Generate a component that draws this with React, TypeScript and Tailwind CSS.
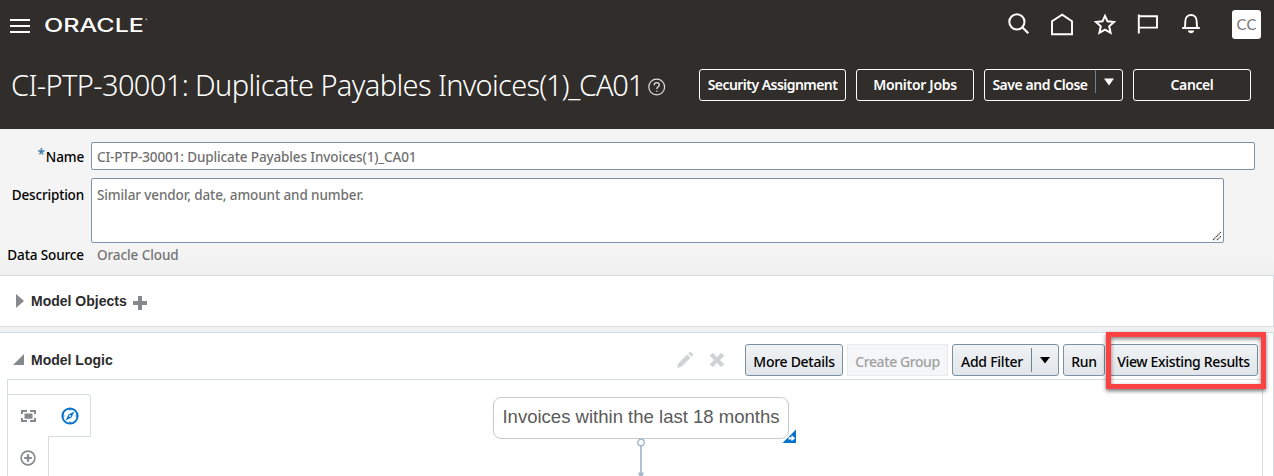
import React from "react";

const icon = { fill: "none", stroke: "#fff", strokeWidth: 2 } as const;

function Logo() {
  return (
    <svg width="108" height="24" viewBox="0 0 108 24" className="ml-[13px] mt-[1px] overflow-visible" aria-label="ORACLE">
      <text x="1" y="18.5" textLength="100" lengthAdjust="spacingAndGlyphs" fill="#fff" className="font-['Inter'] text-[18px] font-medium">
        ORACLE
      </text>
      <circle cx="103.3" cy="6.3" r="0.9" fill="#bbb" />
    </svg>
  );
}

function TopIcons() {
  return (
    <div className="flex items-center">
      <svg width="24" height="24" className="mr-[19px]" {...icon}>
        <circle cx="9.9" cy="9.8" r="7.6" />
        <path d="M15.3 15.3 21.3 21.3" strokeWidth="2.2" />
      </svg>
      <svg width="24" height="24" className="mr-[19px]" {...icon}>
        <path d="M2 22.2V9.3L12.2 2.6 22 9.3V22.2Z" strokeWidth="1.9" />
      </svg>
      <svg width="24" height="24" className="mr-[19px]" {...icon}>
        <path d="M12 3.8 14.5 9.3 21 10 16.2 14.3 17.6 20.8 12 17.6 6.4 20.8 7.8 14.3 3 10 9.5 9.3Z" strokeWidth="2" />
      </svg>
      <svg width="24" height="24" className="mr-[19px]" {...icon}>
        <path d="M2.8 2.5V21.6M2.8 4.3H21V15.6H2.8" strokeWidth="1.9" />
      </svg>
      <svg width="24" height="24" className="mr-[29px]" {...icon}>
        <path d="M3.2 16H20.8M5.6 16C6.4 14 6.2 12 6.3 9.3 6.4 5.5 8.7 3 12 3S17.6 5.5 17.7 9.3C17.8 12 17.6 14 18.4 16" strokeWidth="1.9" />
        <path d="M8.7 18.4H15.3C14.8 20 13.7 21.2 12 21.2S9.2 20 8.7 18.4Z" fill="#fff" stroke="none" />
      </svg>
      <div className="flex h-[29px] w-[29px] items-center justify-center rounded-[3px] bg-white font-['Lato'] text-[15px] text-[#777]">CC</div>
    </div>
  );
}

const darkButton = "flex h-8 items-center justify-center rounded-[3px] border border-white text-sm font-semibold text-white whitespace-nowrap";
const lightButton =
  "flex h-8 items-center justify-center rounded-[3px] border border-[#7a91a3] bg-linear-to-b from-[#f1f3f5] to-[#e1e5e9] pt-[3px] text-sm font-medium text-black whitespace-nowrap";

function Header() {
  return (
    <header className="h-[129px] bg-[#312d2a]">
      <div className="flex h-12 items-center justify-between pr-[13px] pl-[10px]">
        <div className="flex items-center">
          <svg width="20" height="16" className="mt-[4px]">
            <path d="M0 2H20M0 8H20M0 14H20" stroke="#fff" strokeWidth="2" />
          </svg>
          <Logo />
        </div>
        <TopIcons />
      </div>
      <div className="flex h-[74px] items-center justify-between pr-[23px] pl-[11px]">
        <div className="flex items-center">
          <h1 className="w-[637px] text-[29px] leading-10 font-light tracking-[-0.72px] whitespace-nowrap text-white">
            <span className="tracking-[-0.62px]">CI-PTP-30001: Duplicate Payables </span>Invoices<span className="tracking-[-1.25px]">(1)_CA01</span>
          </h1>
          <svg width="18" height="18" className="mt-[3px]">
            <circle cx="8.7" cy="9" r="7.9" fill="none" stroke="#ddd" strokeWidth="1.2" />
            <path d="M6.2 7.2C6.2 5.6 7.2 4.7 8.7 4.7S11.3 5.6 11.3 6.9C11.3 8.7 8.8 8.7 8.8 11M8.8 12.4V13.7" fill="none" stroke="#ddd" strokeWidth="1.3" />
          </svg>
        </div>
        <div className="flex gap-[10px]">
          <button className={`${darkButton} w-[147px] tracking-[-0.54px]`}>Security Assignment</button>
          <button className={`${darkButton} w-[118px] tracking-[-0.3px]`}>Monitor Jobs</button>
          <button className={`${darkButton} w-[139px] tracking-[-0.45px]`}>
            <span className="w-[110px] text-center">Save and Close</span>
            <span className="mb-[7px] flex h-[23px] w-[27px] items-center justify-center border-l border-[#6e8494]">
              <svg width="10" height="8"><path d="M0 0.5H10L5 7.5Z" fill="#fff" /></svg>
            </span>
          </button>
          <button className={`${darkButton} w-[118px] tracking-[-0.4px]`}>Cancel</button>
        </div>
      </div>
    </header>
  );
}

function Form() {
  return (
    <section className="h-[146px] bg-linear-to-b from-[#f4f4f4] from-85% to-[#efefef] pt-[13px] text-[13.5px] font-medium">
      <div className="flex h-7 items-center">
        <label className="w-[91px] pt-[3px] pr-[7px] text-right tracking-[-0.15px] text-black"><span className="relative -top-[3px] mr-[1px] text-[#2d76a8]">*</span>Name</label>
        <div className="flex h-7 w-[1164px] items-center rounded-[2px] border border-[#7d93a5] bg-white pt-[2px] pl-[5px] tracking-[-0.12px] text-[#707070]">CI-PTP-30001: Duplicate Payables Invoices(1)_CA01</div>
      </div>
      <div className="mt-2 flex h-[65px]">
        <label className="w-[91px] pt-[7px] pr-[7px] text-right tracking-[-0.17px] text-black">Description</label>
        <div className="flex w-[1133px] justify-between rounded-[2px] border border-[#7d93a5] bg-white pt-[6px] pl-[5px] text-[#707070]">
          <span className="tracking-[-0.1px]">Similar vendor, date, amount and number.</span>
          <svg width="10" height="10" className="mr-[1px] mb-[1px] self-end">
            <path d="M1 9 9 1M5 9 9 5" stroke="#444" strokeWidth="1.1" strokeDasharray="1.5 0.5" />
          </svg>
        </div>
      </div>
      <div className="flex h-6 items-center">
        <span className="w-[91px] pr-[7px] text-right tracking-[-0.12px] whitespace-nowrap text-black">Data Source</span>
        <span className="pl-[6px] tracking-[-0.08px] text-[#747474]">Oracle Cloud</span>
      </div>
    </section>
  );
}

function LogicToolbar() {
  return (
    <div className="flex h-[46px] items-start justify-between pr-[15px] pl-[13px]">
      <div className="flex items-center pt-[17px]">
        <svg width="12" height="12"><path d="M11 0V11H0Z" fill="#85898c" /></svg>
        <h2 className="ml-[6px] font-['Liberation_Sans'] text-sm leading-5 font-bold text-[#2b2b2b]">Model Logic</h2>
      </div>
      <div className="flex pt-[11px]">
        <svg width="18" height="18" className="mt-[7px] mr-[15px]" fill="#cfd3d4">
          <path d="M1 17 2.4 12.3 11.2 3.5 14.5 6.8 5.7 15.6ZM12.2 2.5 13.5 1.2Q14.2.6 15 1.3L16.7 3Q17.4 3.8 16.8 4.5L15.5 5.8Z" />
        </svg>
        <svg width="16" height="16" className="mt-[8px] mr-[20px]">
          <path d="M2.2 2.2 13.8 13.8M13.8 2.2 2.2 13.8" stroke="#cfd3d4" strokeWidth="4.2" />
        </svg>
        <div className="flex gap-1">
          <button className={`${lightButton} w-[98px] tracking-[-0.28px]`}>More Details</button>
          <button className="flex h-8 w-[101px] items-center justify-center border border-[#e7eaed] bg-[#f5f6f8] pt-[3px] text-sm font-medium tracking-[-0.42px] whitespace-nowrap text-[#a0a0a0]">Create Group</button>
          <button className={`${lightButton} w-[107px] tracking-[-0.25px]`}>
            <span className="w-[78px] text-center">Add Filter</span>
            <span className="-mt-[3px] flex h-6 w-[27px] items-center justify-center border-l border-[#6e8494]">
              <svg width="10" height="8"><path d="M0 1H10L5 7.5Z" fill="#000" /></svg>
            </span>
          </button>
          <button className={`${lightButton} w-[42px] tracking-[-0.3px]`}>Run</button>
          <div className="relative z-10">
            <button className={`${lightButton} w-[149px] tracking-[-0.34px]`}>View Existing Results</button>
            <div className="absolute -top-[12px] -left-[3px] h-[57px] w-[160px] border-[5px] border-[#fb4242] shadow-[0_2px_4px_rgba(0,0,0,0.55),inset_0_2px_4px_rgba(0,0,0,0.5)]" />
          </div>
        </div>
      </div>
    </div>
  );
}

function Canvas() {
  return (
    <div className="relative ml-[7px] h-[97px] w-[1256px] border-x border-t border-[#d5dde3] pt-[14px]">
      <div className="flex h-[43px] w-[83px] items-center rounded-tr-[3px] border-t border-r border-b border-[#d5dde3]">
        <svg width="16" height="14" className="ml-[13px]" fill="#85898c">
          <path d="M0 1H6V3H2V5H0ZM9 1H15V5H13V3H9ZM0 9H2V11H6V13H0ZM13 9H15V13H9V11H13ZM3.5 4.5H11.5V9.8H3.5Z" />
        </svg>
        <svg width="18" height="18" viewBox="0 0 18 18" className="ml-[24px]">
          <circle cx="9" cy="9" r="7.6" fill="none" stroke="#0572ce" strokeWidth="2" />
          <path d="M9 1V3.5M9 14.5V17M1 9H3.5M14.5 9H17" stroke="#0572ce" strokeWidth="1.2" />
          <path d="M13.4 4.4 10.5 10.5 4.6 13.6 7.5 7.5Z" fill="#0572ce" />
          <circle cx="9" cy="9" r="1" fill="#fff" />
        </svg>
      </div>
      <div className="-mt-px flex h-[42px] w-[41px] items-start border-r border-[#d5dde3] bg-white pt-[14px] pl-[12px]">
        <svg width="17" height="17">
          <circle cx="8" cy="8" r="6.9" fill="none" stroke="#85898c" strokeWidth="1.6" />
          <path d="M8 4.2V11.8M4.2 8H11.8" stroke="#85898c" strokeWidth="2.2" />
        </svg>
      </div>
      <div className="absolute top-[17px] left-[485px] flex h-[42px] w-[296px] items-center justify-center rounded-[8px] border-[1.5px] border-[#c7c9cb] bg-white pb-[3px] font-['Liberation_Sans'] text-[18.55px] whitespace-nowrap text-[#5a5a5a]">
        Invoices within the last 18 months
      </div>
      <svg width="15" height="15" className="absolute top-[49px] left-[774px]">
        <path d="M14 0.5V14H0.5Z" fill="#0572ce" />
        <path d="M6.5 8.2H9.5V6.3L13.3 9.3 9.5 12.3V10.5H6.5Z" fill="#fff" />
      </svg>
      <svg width="12" height="38" className="absolute top-[58px] left-[627px]" stroke="#a3b8ca">
        <path d="M6 8V38" strokeWidth="1.7" />
        <circle cx="6" cy="4.5" r="3.2" fill="#fff" strokeWidth="1.4" />
        <path d="M3 34.5H9L7.5 38H4.5Z" fill="#a3b8ca" stroke="none" />
      </svg>
    </div>
  );
}

export default function App() {
  return (
    <div className="h-[476px] w-[1274px] overflow-hidden bg-[#eff1f3] font-['Noto_Sans','Open_Sans',sans-serif]">
      <Header />
      <Form />
      <section className="flex h-[52px] items-center border-y border-r border-[#d5dde3] bg-white pl-[16px]">
        <svg width="9" height="14"><path d="M0 0 8 7 0 14Z" fill="#85898c" /></svg>
        <h2 className="ml-[6px] font-['Liberation_Sans'] text-sm leading-5 font-bold text-[#2b2b2b]">Model Objects</h2>
        <svg width="14" height="14" className="mt-[3px] ml-[6px]"><path d="M7 0V14M0 7H14" stroke="#85898c" strokeWidth="4" /></svg>
      </section>
      <section className="mt-[5px] h-[144px] border-t border-r border-[#d5dde3] bg-white">
        <LogicToolbar />
        <Canvas />
      </section>
    </div>
  );
}
